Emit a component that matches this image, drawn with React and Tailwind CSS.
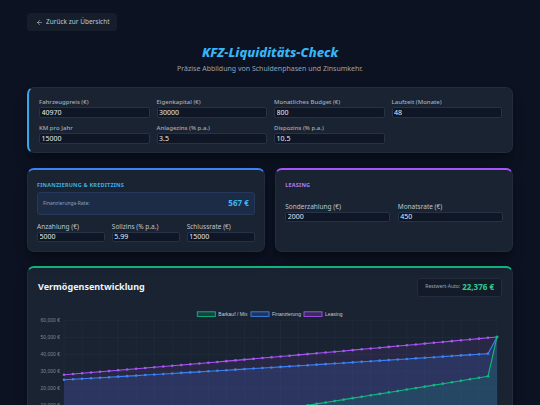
import { ArrowLeft } from "lucide-react";

// Eingaben
const PRICE = 40970;
const EQUITY = 30000;
const BUDGET = 800;
const MONTHS = 48;
const ANLAGE = 0.035 / 12;
const DISPO = 0.105 / 12;
const FIN_RATE = 567;
const FIN_DOWN = 5000;
const LEASE_DOWN = 2000;
const LEASE_RATE = 450;

function simulate() {
    const cash = [];
    const fin = [];
    const lease = [];
    let c = EQUITY - PRICE;
    let f = EQUITY - FIN_DOWN;
    let l = EQUITY - LEASE_DOWN;
    for (let m = 0; m <= MONTHS; m++) {
        if (m > 0) {
            c = c * (1 + (c < 0 ? DISPO : ANLAGE)) + BUDGET;
            f = f * (1 + (f < 0 ? DISPO : ANLAGE)) + BUDGET - FIN_RATE;
            l = l * (1 + ANLAGE) + BUDGET - LEASE_RATE;
        }
        cash.push(c);
        fin.push(f);
        lease.push(l);
    }
    cash[MONTHS] = lease[MONTHS];
    fin[MONTHS] = lease[MONTHS];
    return { cash, fin, lease };
}

const { cash, fin, lease } = simulate();

const X0 = 64;
const X1 = 497;
const xOf = m => X0 + (m * (X1 - X0)) / MONTHS;
const yOf = v => 319.3 + ((60000 - v) * 17) / 10000;
const TICKS = [60000, 50000, 40000, 30000, 20000, 10000, 0, -10000, -20000];

function linePath(data) {
    return data.map((v, m) => `${m ? "L" : "M"}${xOf(m).toFixed(2)},${yOf(v).toFixed(2)}`).join(" ");
}

function areaPath(data) {
    const base = yOf(0).toFixed(2);
    return `${linePath(data)} L${xOf(MONTHS)},${base} L${xOf(0)},${base} Z`;
}

const SERIES = [
    { name: "Leasing", data: lease, stroke: "#a855f7", fill: "rgba(168,85,247,0.10)" },
    { name: "Finanzierung", data: fin, stroke: "#3b82f6", fill: "rgba(59,130,246,0.15)" },
    { name: "Barkauf / Mix", data: cash, stroke: "#10b981", fill: "rgba(16,185,129,0.14)" },
];

const LEGEND = [
    { label: "Barkauf / Mix", x: 197.3, stroke: "#10b981", fill: "rgba(16,185,129,0.2)" },
    { label: "Finanzierung", x: 251, stroke: "#3b82f6", fill: "rgba(59,130,246,0.2)" },
    { label: "Leasing", x: 304, stroke: "#a855f7", fill: "rgba(168,85,247,0.2)" },
];

function Chart() {
    const fmt = v => `${v.toLocaleString("en-US")} €`;
    return (
        <svg width="464" height="170" viewBox="38 303 464 170" className="block mt-[7px]">
            {/* grid */}
            {TICKS.map(t => (
                <line key={t} x1={X0} x2={X1} y1={yOf(t)} y2={yOf(t)} stroke="#253040" strokeWidth="0.6" />
            ))}
            {Array.from({ length: 25 }, (_, k) => X0 + (k * (X1 - X0)) / 24).map(x => (
                <line key={x} x1={x} x2={x} y1={yOf(60000)} y2={yOf(-20000)} stroke="#232d3c" strokeWidth="0.6" />
            ))}
            {TICKS.map(t => (
                <text key={t} x="60" y={yOf(t) + 1.7} textAnchor="end" fontSize="5" fill="#7b8697" fontFamily="'Liberation Sans', Arial, sans-serif">
                    {fmt(t)}
                </text>
            ))}

            {/* legend */}
            {LEGEND.map(l => (
                <g key={l.label}>
                    <rect x={l.x} y="310.8" width="18" height="4.6" fill={l.fill} stroke={l.stroke} strokeWidth="0.9" />
                    <text x={l.x + 21} y="314.8" fontSize="5" fill="#c3cad5" fontFamily="'Liberation Sans', Arial, sans-serif">
                        {l.label}
                    </text>
                </g>
            ))}

            {/* areas */}
            {SERIES.map(s => (
                <path key={s.name + "a"} d={areaPath(s.data)} fill={s.fill} />
            ))}
            {/* lines + points */}
            {SERIES.map(s => (
                <g key={s.name}>
                    <path d={linePath(s.data)} fill="none" stroke={s.stroke} strokeWidth="1.1" strokeLinejoin="round" />
                    {s.data.map((v, m) => (
                        <circle key={m} cx={xOf(m)} cy={yOf(v)} r="1.3" fill={s.stroke} />
                    ))}
                </g>
            ))}
        </svg>
    );
}

function Field({ label, value, big }) {
    return (
        <div>
            <label className={`block mb-[1px] ${big ? "text-[6.5px] leading-[8px] text-[#bcc4d0]" : "font-medium text-[6px] leading-[7px] text-[#a3adbb]"}`}>
                {label}
            </label>
            <input
                readOnly
                value={value}
                className={`block w-full bg-[#0f1727] border border-[#273246] rounded-[2px] px-[1.5px] text-[7px] leading-none text-[#e5e9f0] outline-none ${big ? "h-[10px]" : "h-[11px]"}`}
            />
        </div>
    );
}

export default function App() {
    return (
        <div className="min-h-screen bg-[#0c1221] font-['Noto_Sans',sans-serif]">
            <div className="w-[486px] mx-auto pt-[13px] pb-6">
                <button className="flex items-center gap-[3px] h-[18px] pl-[9px] pr-[7px] rounded-[4px] bg-[#161e2c] text-[6.5px] text-[#bcc5d1]">
                    <ArrowLeft size={7} strokeWidth={2} />
                    Zurück zur Übersicht
                </button>

                <header className="text-center mt-[13px]">
                    <h1 className="text-[13px] leading-[16px] font-extrabold italic text-[#38b6f5]">KFZ-Liquiditäts-Check</h1>
                    <p className="mt-[3.5px] text-[7px] leading-[9px] text-[#97a2b3]">
                        Präzise Abbildung von Schuldenphasen und Zinsumkehr.
                    </p>
                </header>

                {/* Basisdaten */}
                <section className="mt-[14.5px] bg-[#1a2332] border border-[#222c3c] border-l-2 border-l-[#3aa6e8] rounded-[7px] pt-[11px] pb-[8px] px-[10px] shadow-lg shadow-black/30">
                    <div className="grid grid-cols-4 gap-x-[7px] gap-y-[7.4px]">
                        <Field label="Fahrzeugpreis (€)" value="40970" />
                        <Field label="Eigenkapital (€)" value="30000" />
                        <Field label="Monatliches Budget (€)" value="800" />
                        <Field label="Laufzeit (Monate)" value="48" />
                        <Field label="KM pro Jahr" value="15000" />
                        <Field label="Anlagezins (% p.a.)" value="3.5" />
                        <Field label="Dispozins (% p.a.)" value="10.5" />
                    </div>
                </section>

                <div className="mt-[14.5px] grid grid-cols-2 gap-[10.5px]">
                    <section className="bg-[#1a2332] border border-[#222c3c] border-t-2 border-t-[#3b82f6] rounded-[7px] pt-[11px] pb-[9px] px-[9px] shadow-lg shadow-black/30">
                        <h2 className="text-[5.5px] leading-[8px] font-bold uppercase tracking-[0.2px] text-[#3aade6]">Finanzierung &amp; Kreditzins</h2>
                        <div className="mt-[3px] h-[23px] flex items-center justify-between px-[5px] bg-[#1c2c47] border border-[#26395a] rounded-[3px]">
                            <span className="text-[5px] text-[#94a0b3]">Finanzierungs-Rate:</span>
                            <span className="text-[8px] font-bold text-[#38b6f5]">567 €</span>
                        </div>
                        <div className="mt-[7.7px] grid grid-cols-3 gap-x-[6.7px]">
                            <Field big label="Anzahlung (€)" value="5000" />
                            <Field big label="Sollzins (% p.a.)" value="5.99" />
                            <Field big label="Schlussrate (€)" value="15000" />
                        </div>
                    </section>

                    <section className="bg-[#1a2332] border border-[#222c3c] border-t-2 border-t-[#a855f7] rounded-[7px] pt-[11px] pb-[9px] px-[9px] shadow-lg shadow-black/30">
                        <h2 className="text-[5.5px] leading-[8px] font-bold uppercase tracking-[0.2px] text-[#b77cec]">Leasing</h2>
                        <div className="mt-[14px] grid grid-cols-2 gap-x-[7.3px]">
                            <Field big label="Sonderzahlung (€)" value="2000" />
                            <Field big label="Monatsrate (€)" value="450" />
                        </div>
                    </section>
                </div>

                {/* Chart */}
                <section className="mt-[14px] bg-[#1a2332] border border-[#222c3c] border-t-2 border-t-[#10b981] rounded-[7px] pt-[10px] px-[10px] pb-[10px] shadow-lg shadow-black/30">
                    <div className="flex items-center justify-between">
                        <h2 className="text-[9px] font-bold text-[#f1f4f8]">Vermögensentwicklung</h2>
                        <div className="h-[19px] flex items-center gap-[2px] pl-[7px] pr-[7px] bg-[#131b29] border border-[#232d3d] rounded-[3px]">
                            <span className="text-[5px] text-[#9aa4b4]">Restwert-Auto:</span>
                            <span className="text-[8px] font-bold text-[#2fcb95]">22,376 €</span>
                        </div>
                    </div>
                    <Chart />
                </section>
            </div>
        </div>
    );
}
